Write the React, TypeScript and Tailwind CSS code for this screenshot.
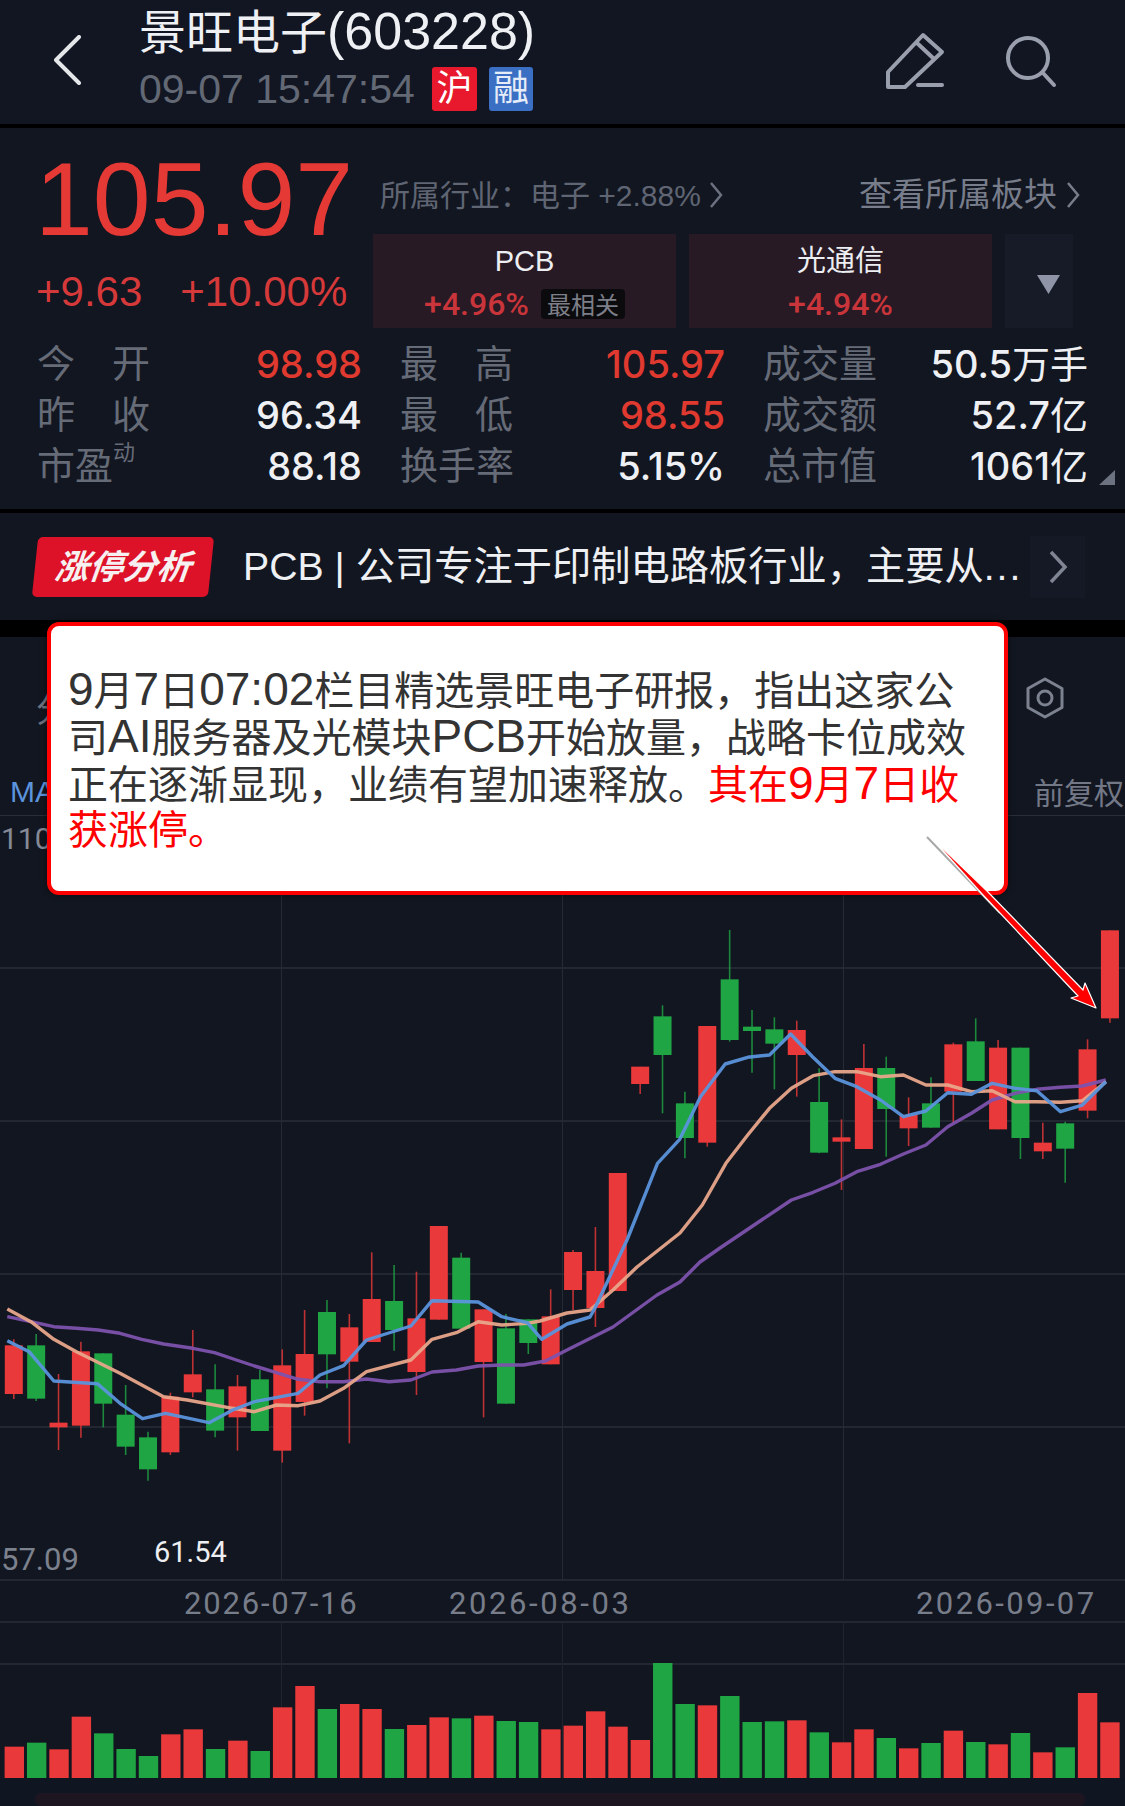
import React from "react";

const RED = "#e9393a";
const GREEN = "#1fa544";

// [colour, wick top, body top, body bottom, wick bottom], y in chart pixels
type Candle = ["r" | "g", number, number, number, number];

const y4 = (v: number) => 1200 + v / 3;
const y5 = (v: number) => 900 + v / 3;

const candles: Candle[] = [
  ["r", y4(418), y4(436), y4(582), y4(597)],
  ["g", y4(402), y4(436), y4(596), y4(603)],
  ["r", y4(522), y4(668), y4(682), y4(750)],
  ["r", y4(425), y4(454), y4(677), y4(713)],
  ["g", y4(460), y4(460), y4(611), y4(682)],
  ["g", y4(555), y4(644), y4(740), y4(765)],
  ["g", y4(695), y4(712), y4(808), y4(842)],
  ["r", y4(578), y4(590), y4(757), y4(765)],
  ["r", y4(390), y4(523), y4(577), y4(592)],
  ["g", y4(493), y4(568), y4(692), y4(712)],
  ["r", y4(525), y4(559), y4(652), y4(752)],
  ["g", y4(510), y4(538), y4(693), y4(693)],
  ["r", y4(448), y4(496), y4(752), y4(788)],
  ["r", y4(330), y4(462), y4(606), y4(647)],
  ["g", y4(300), y4(336), y4(463), y4(565)],
  ["r", y4(342), y4(382), y4(485), y4(730)],
  ["r", y4(157), y4(297), y4(426), y4(426)],
  ["g", y4(195), y4(303), y4(390), y4(452)],
  ["r", y4(215), y4(355), y4(516), y4(585)],
  ["r", y4(78), y4(78), y4(359), y4(359)],
  ["g", y4(158), y4(173), y4(386), y4(386)],
  ["r", y4(328), y4(328), y4(486), y4(652)],
  ["g", y4(342), y4(385), y4(611), y4(611)],
  ["g", y4(358), y4(358), y4(429), y4(462)],
  ["r", y4(268), y4(349), y4(493), y4(493)],
  ["r", 1250, 1252, 1290, 1310],
  ["r", 1227, 1271, 1308, 1327],
  ["r", 1173, 1173, 1291, 1291],
  ["r", y5(500), y5(500), y5(552), y5(582)],
  ["g", y5(316), y5(349), y5(465), y5(640)],
  ["g", y5(575), y5(610), y5(714), y5(775)],
  ["r", y5(378), y5(378), y5(728), y5(740)],
  ["g", y5(90), y5(238), y5(420), y5(425)],
  ["g", y5(330), y5(380), y5(393), y5(518)],
  ["g", y5(352), y5(388), y5(431), y5(568)],
  ["r", y5(362), y5(390), y5(465), y5(590)],
  ["g", y5(505), y5(606), y5(758), y5(760)],
  ["r", y5(658), y5(712), y5(725), y5(870)],
  ["r", y5(432), y5(504), y5(747), y5(747)],
  ["g", y5(470), y5(504), y5(627), y5(770)],
  ["r", y5(592), y5(645), y5(685), y5(738)],
  ["g", y5(532), y5(610), y5(683), y5(683)],
  ["r", y5(428), y5(433), y5(575), y5(670)],
  ["g", y5(355), y5(424), y5(543), y5(543)],
  ["r", y5(420), y5(443), y5(688), y5(688)],
  ["g", y5(443), y5(443), y5(714), y5(777)],
  ["r", y5(668), y5(728), y5(754), y5(777)],
  ["g", y5(665), y5(670), y5(746), y5(848)],
  ["r", y5(418), y5(448), y5(632), y5(655)],
  ["r", y5(91), y5(91), y5(355), y5(368)],
];

// traced from the left and right halves of the chart
const left = (pts: number[][]) => pts.map(([x, y]) => [x / 2.75, y4(y)]);
const right = (pts: number[][]) => pts.map(([x, y]) => [555 + x / 2.75, y5(y)]);
const toPath = (pts: number[][]) => pts.map((p) => `${p[0].toFixed(1)},${p[1].toFixed(1)}`).join(" ");

const ma5 = [
  ...left([[20, 422], [80, 455], [148, 543], [268, 551], [330, 610], [392, 656], [455, 640], [575, 668], [640, 630], [700, 605], [820, 580], [880, 525], [945, 497], [1008, 420], [1130, 378], [1188, 302], [1315, 306], [1380, 350], [1450, 368], [1490, 418]]),
  [567, 1324], [590, 1317], [595, 1308], [627, 1240],
  ...right([[282, 790], [343, 718], [400, 590], [468, 492], [530, 472], [590, 465], [648, 402], [708, 470], [770, 535], [830, 560], [895, 600], [958, 650], [1020, 633], [1080, 578], [1145, 583], [1202, 550], [1265, 565], [1325, 572], [1390, 635], [1450, 615], [1515, 545]]),
];

const ma10 = [
  ...left([[20, 327], [85, 365], [148, 418], [210, 455], [330, 520], [450, 590], [515, 600], [640, 625], [700, 635], [760, 615], [820, 617], [880, 603], [945, 565], [1008, 515], [1130, 480], [1188, 418], [1255, 398], [1315, 365], [1380, 375], [1450, 370]]),
  [540, 1321], [567, 1313], [590, 1310], [613, 1290], [637, 1267], [680, 1233],
  ...right([[405, 915], [470, 790], [530, 705], [590, 625], [650, 565], [710, 527], [770, 515], [830, 515], [895, 530], [958, 525], [1020, 555], [1080, 555], [1145, 575], [1202, 572], [1265, 605], [1325, 605], [1390, 607], [1450, 602], [1515, 545]]),
];

const ma20 = [
  ...left([[20, 350], [85, 365], [148, 380], [210, 385], [270, 390], [330, 400], [390, 418], [450, 432], [530, 445], [590, 458], [650, 480], [700, 498], [760, 518], [820, 538], [880, 545], [945, 545], [1008, 537], [1070, 545], [1130, 540], [1188, 516], [1255, 510], [1315, 498], [1380, 495], [1440, 495], [1500, 483]]),
  [567, 1350], [613, 1327], [657, 1295], [680, 1282], [700, 1262], [720, 1248],
  ...right([[650, 900], [710, 877], [770, 850], [830, 815], [895, 793], [958, 762], [1020, 735], [1080, 680], [1145, 640], [1202, 600], [1265, 580], [1325, 568], [1390, 562], [1450, 558], [1515, 540]]),
];

// 成交量 bars: colour and top edge
const volumes: ["r" | "g", number][] = [
  ["r", 740], ["g", 728], ["r", 748], ["r", 650], ["g", 700], ["g", 747], ["g", 768], ["r", 703], ["r", 688], ["g", 747],
  ["r", 722], ["g", 753], ["r", 622], ["r", 558], ["g", 627], ["r", 612], ["r", 627], ["g", 687], ["r", 675], ["r", 652],
  ["g", 655], ["r", 647], ["g", 663], ["g", 666], ["r", 688], ["r", 677], ["r", 634], ["r", 680], ["r", 720], ["g", 489],
  ["g", 612], ["r", 616], ["g", 588], ["g", 666], ["g", 664], ["r", 661], ["g", 697], ["r", 727], ["r", 688], ["g", 714],
  ["r", 745], ["g", 729], ["r", 692], ["g", 726], ["r", 733], ["g", 699], ["r", 757], ["g", 742], ["r", 579], ["r", 667],
];

type Stat = { l: string[]; sup?: string; v: string; u?: string; red?: boolean };

const stats: Stat[] = [
  { l: ["今", "开"], v: "98.98", red: true },
  { l: ["最", "高"], v: "105.97", red: true },
  { l: ["成交量"], v: "50.5", u: "万手" },
  { l: ["昨", "收"], v: "96.34" },
  { l: ["最", "低"], v: "98.55", red: true },
  { l: ["成交额"], v: "52.7", u: "亿" },
  { l: ["市盈"], sup: "动", v: "88.18" },
  { l: ["换手率"], v: "5.15%" },
  { l: ["总市值"], v: "1061", u: "亿" },
];

function Chart() {
  return (
    <svg className="block" width={1125} height={990} viewBox="0 816 1125 990">
      {[968, 1121, 1274, 1427, 1580, 1622, 1664].map((y) => (
        <line key={y} x1={0} x2={1125} y1={y} y2={y} stroke="#2a2e39" strokeWidth={1.5} />
      ))}
      {[281.5, 562.5, 843.5].map((x) => (
        <g key={x}>
          <line x1={x} x2={x} y1={816} y2={1580} stroke="#262a35" strokeWidth={1} />
          <line x1={x} x2={x} y1={1622} y2={1778} stroke="#20242e" strokeWidth={1} />
        </g>
      ))}

      {candles.map(([c, wt, bt, bb, wb], i) => {
        const x = 13.8 + 22.37 * i;
        const fill = c === "r" ? RED : GREEN;
        return (
          <g key={i}>
            <line x1={x} x2={x} y1={wt} y2={wb} stroke={fill} strokeWidth={1.6} opacity={0.8} />
            <rect x={x - 9} y={bt} width={18} height={bb - bt} fill={fill} />
          </g>
        );
      })}

      <polyline points={toPath(ma20)} fill="none" stroke="#7d52ad" strokeWidth={3.4} strokeLinejoin="round" opacity={0.95} />
      <polyline points={toPath(ma10)} fill="none" stroke="#e8a58a" strokeWidth={3.4} strokeLinejoin="round" opacity={0.95} />
      <polyline points={toPath(ma5)} fill="none" stroke="#5b93dc" strokeWidth={3.4} strokeLinejoin="round" opacity={0.95} />

      <g fontFamily="Roboto, 'Liberation Sans', sans-serif" fontSize={30}>
        <text x={1} y={849} fill="#858a96">110</text>
        <text x={1} y={1570} fill="#7c818e" fontSize={31}>57.09</text>
        <text x={154} y={1562} fill="#eceef2" fontSize={29}>61.54</text>
        <g fontSize={31}>
          <text x={184} y={1614} fill="#787d8a" letterSpacing={1.8}>2026-07-16</text>
          <text x={449} y={1614} fill="#787d8a" letterSpacing={2.6}>2026-08-03</text>
          <text x={916} y={1614} fill="#787d8a" letterSpacing={2.4}>2026-09-07</text>
        </g>
      </g>

      {volumes.map(([c, top], i) => {
        const y = 1500 + top / 3;
        return <rect key={i} x={4.6 + 22.36 * i} y={y} width={19.4} height={1778 - y} fill={c === "r" ? RED : GREEN} />;
      })}
      <rect x={0} y={1778} width={1125} height={28} fill="#0f1622" />
      <rect x={35} y={1793} width={1050} height={13} rx={6} fill="#1d1620" />
    </svg>
  );
}

// 数字和字母比汉字大一号
function L({ children }: { children: React.ReactNode }) {
  return <span className="text-[46px]">{children}</span>;
}

export default function App() {
  return (
    <div
      className="relative w-[1125px] h-[1806px] overflow-hidden bg-black"
      style={{ fontFamily: "'Liberation Sans', 'Noto Sans CJK SC', sans-serif" }}
    >
      {/* 顶部标题 */}
      <div className="h-[124px] bg-[#111622] flex relative">
        <svg className="ml-[54px] mt-[35px]" width={28} height={50} viewBox="0 0 28 50" fill="none">
          <path d="M25 2 2 25l23 23" stroke="#e6e7ea" strokeWidth={4} strokeLinecap="round" strokeLinejoin="round" />
        </svg>
        <div className="ml-[57px] pt-[6px]">
          <div className="h-[50px] text-[47px] leading-[50px] text-[#eef0f3] whitespace-nowrap">
            景旺电子<span className="text-[52px]">(603228)</span>
          </div>
          <div className="flex items-center mt-[11px]">
            <span className="text-[41px] leading-[44px] text-[#636875] w-[293px] whitespace-nowrap">09-07 15:47:54</span>
            <span className="w-[45px] h-[44px] rounded-[3px] bg-[#e8192c] text-white text-[36px] leading-[44px] text-center">沪</span>
            <span className="w-[44px] h-[44px] ml-[12px] rounded-[3px] bg-[#3a6fc4] text-[#e6ecf8] text-[36px] leading-[44px] text-center">融</span>
          </div>
        </div>
        <div className="ml-auto mr-[68px] mt-[32px] flex gap-[59px]">
          <svg width={60} height={62} viewBox="886 32 60 62" fill="none" stroke="#9a9fad" strokeWidth={4} strokeLinecap="round" strokeLinejoin="round">
            <path d="M888 72 923 35l19 17-37 35h-17z" />
            <path d="m917 43 16 15" />
            <path d="M918 85h24" />
          </svg>
          <svg width={52} height={62} viewBox="1004 32 52 62" fill="none" stroke="#9a9fad" strokeWidth={4} strokeLinecap="round">
            <circle cx={1027} cy={58} r={20} />
            <path d="m1042 73 11 12" />
          </svg>
        </div>
      </div>

      {/* 行情 */}
      <div className="mt-[4px] h-[381px] bg-[#121620] relative">
        <div className="h-[211px] flex">
          <div className="w-[373px] pl-[35px] pt-[19px]">
            <div className="text-[104px] leading-[104px] text-[#e53935]">105.97</div>
            <div className="flex gap-[38px] mt-[20px] pl-[1px] text-[42px] leading-[42px] text-[#d6393a] whitespace-nowrap">
              <span>+9.63</span>
              <span>+10.00%</span>
            </div>
          </div>
          <div className="flex-1 pt-[49px]">
            <div className="h-[36px] pl-[7px] pr-[45px] flex items-center justify-between">
              <span className="flex items-center text-[30px] text-[#5f6573] whitespace-nowrap">
                所属行业：电子 +2.88%
                <svg className="ml-[8px]" width={14} height={28} viewBox="0 0 14 28" fill="none" stroke="#6b7180" strokeWidth={2.5}>
                  <path d="m2 2 10 12L2 26" />
                </svg>
              </span>
              <span className="flex items-center text-[33px] text-[#787d8b] whitespace-nowrap">
                查看所属板块
                <svg className="ml-[9px]" width={14} height={28} viewBox="0 0 14 28" fill="none" stroke="#787d8b" strokeWidth={2.5}>
                  <path d="m2 2 10 12L2 26" />
                </svg>
              </span>
            </div>
            <div className="mt-[21px] flex gap-[13px]">
              <div className="w-[303px] h-[94px] bg-[#281a24] flex flex-col items-center pt-[9px]">
                <span className="text-[29px] leading-[36px] text-[#eceef2]">PCB</span>
                <span className="mt-[8px] flex items-center text-[32px] leading-[34px] font-medium text-[#c9353a] whitespace-nowrap" style={{ fontFamily: "Roboto, sans-serif" }}>
                  +4.96%
                  <span className="ml-[12px] px-[6px] h-[30px] rounded-[4px] bg-[#0b0b0e] text-[24px] leading-[30px] font-normal text-[#7d7f88]" style={{ fontFamily: "'Noto Sans CJK SC', sans-serif" }}>
                    最相关
                  </span>
                </span>
              </div>
              <div className="w-[303px] h-[94px] bg-[#281a24] flex flex-col items-center pt-[9px]">
                <span className="text-[29px] leading-[36px] text-[#eceef2]">光通信</span>
                <span className="mt-[8px] text-[32px] leading-[34px] font-medium text-[#c9353a]" style={{ fontFamily: "Roboto, sans-serif" }}>
                  +4.94%
                </span>
              </div>
              <div className="w-[68px] h-[94px] bg-[#161b27] pl-[32px] pt-[41px]">
                <svg width={23} height={19} viewBox="0 0 23 19">
                  <path d="M0 0h23L11.500 19z" fill="#8f95a6" />
                </svg>
              </div>
            </div>
          </div>
        </div>

        <div className="pl-[37px] grid grid-cols-[325px_325px_325px] gap-x-[38px] auto-rows-[51px]">
          {stats.map((s, i) => (
            <div key={i} className="flex items-center justify-between whitespace-nowrap">
              <span className={`flex ${s.l.length > 1 ? "justify-between w-[113px]" : ""} text-[38px] text-[#666b78]`}>
                {s.l.map((t) => (
                  <span key={t}>{t}</span>
                ))}
                {s.sup && <span className="text-[22px] leading-[30px]">{s.sup}</span>}
              </span>
              <span className={`text-[38px] font-medium ${s.red ? "text-[#e0392f]" : "text-[#eef0f3]"}`} style={{ fontFamily: "Inter, 'Noto Sans CJK SC', sans-serif" }}>
                {s.v}
                {s.u && <span className="font-normal">{s.u}</span>}
              </span>
            </div>
          ))}
        </div>
        <svg className="absolute left-[1099px] top-[342px]" width={16} height={16} viewBox="0 0 16 16">
          <path d="M16 0v15H0z" fill="#6d7280" />
        </svg>
      </div>

      {/* 涨停分析 */}
      <div className="mt-[4px] h-[107px] bg-[#121620] flex items-center pl-[35px] relative">
        <div className="w-[176px] h-[60px] -skew-x-6 rounded-[5px] bg-[#dd1128] flex items-center justify-center">
          <span className="text-[34px] font-bold italic text-[#f6f0f0] whitespace-nowrap">涨停分析</span>
        </div>
        <span className="ml-[32px] text-[39.250px] text-[#eef0f3] whitespace-nowrap">
          PCB | 公司专注于印制电路板行业，主要从<span className="tracking-[2px]">...</span>
        </span>
        <div className="ml-auto mr-[40px] w-[55px] h-[62px] bg-[#141925] flex items-center justify-center">
          <svg width={20} height={34} viewBox="0 0 20 34" fill="none" stroke="#808594" strokeWidth={3.5}>
            <path d="m3 2 14 15L3 32" />
          </svg>
        </div>
      </div>

      {/* K线 */}
      <div className="mt-[17px] bg-[#121620]">
        <div className="h-[179px] border-b border-[#2a2e39] flex justify-between">
          <div className="flex flex-col justify-between pl-[10px] pb-[6px] relative">
            <span className="text-[34px] pt-[48px] pl-[26px] text-[#6d7280]">分</span>
            <span className="text-[30px] leading-[34px] text-[#5b93dc]">MA</span>
          </div>
          <div className="w-[99px] flex flex-col justify-between pt-[40px] pb-[3px]">
            <svg width={38} height={42} viewBox="0 0 38 42" fill="none" stroke="#7c8290" strokeWidth={3}>
              <path d="M19 2 36 11.500v19L19 40 2 30.500v-19z" strokeLinejoin="round" />
              <circle cx={19} cy={21} r={7} />
            </svg>
            <span className="pl-[8px] text-[30px] leading-[36px] text-[#737887] whitespace-nowrap">前复权</span>
          </div>
        </div>
        <Chart />
      </div>

      {/* 说明框和箭头 */}
      <div className="absolute left-[47px] top-[622px] w-[961px] h-[273px] rounded-xl border-4 border-[#ff0000] bg-white pl-[17px] pt-[40px] shadow-[0_0_6px_rgba(0,0,0,0.5)]">
        <div className="text-[40px] text-[#333333] whitespace-nowrap">
          <div className="h-[47px] leading-[47px]">
            <L>9</L>月<L>7</L>日<L>07:02</L>栏目精选景旺电子研报，指出这家公
          </div>
          <div className="h-[47px] leading-[47px]">
            司<L>AI</L>服务器及光模块<L>PCB</L>开始放量，战略卡位成效
          </div>
          <div className="h-[47px] leading-[47px]">
            正在逐渐显现，业绩有望加速释放。
            <span className="text-[#ff0000]">
              其在<L>9</L>月<L>7</L>日收
            </span>
          </div>
          <div className="h-[47px] leading-[47px] text-[#ff0000]">获涨停。</div>
        </div>
      </div>
      <svg className="absolute left-0 top-0 pointer-events-none" width={1125} height={1806} viewBox="0 0 1125 1806">
        <line x1={927} y1={837} x2={1000} y2={913} stroke="#a8a8a8" strokeWidth={2} />
        <path d="M929 835 987 891 1083 990l2-7 11 25-25-10 7-2-95-101z" fill="#ff0000" stroke="#ffffff" strokeWidth={1.2} strokeLinejoin="round" />
      </svg>
    </div>
  );
}
